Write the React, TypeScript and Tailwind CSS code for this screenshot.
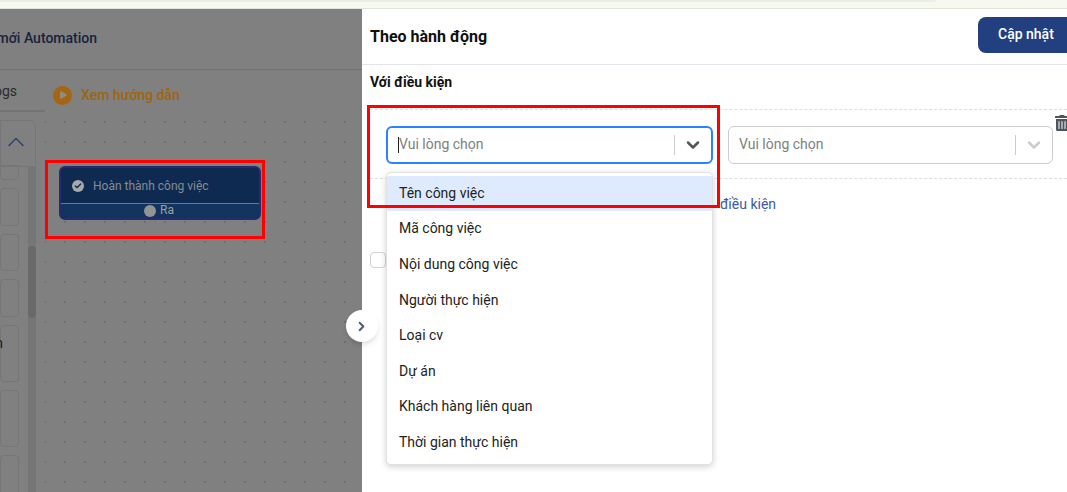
import { Check, ChevronDown, ChevronRight, ChevronUp, Play } from 'lucide-react'
import { FaTrashAlt } from 'react-icons/fa'

const options = [
  'Tên công việc',
  'Mã công việc',
  'Nội dung công việc',
  'Người thực hiện',
  'Loại cv',
  'Dự án',
  'Khách hàng liên quan',
  'Thời gian thực hiện',
]

function Sidebar() {
  return (
    <div className="w-[45px] shrink-0 flex flex-col overflow-hidden">
      <div className="h-[42px] shrink-0 border-b-2 border-[#747474] text-[14px] leading-[42px] text-[#2b2b2b] flex justify-end pr-[28px] whitespace-nowrap">
        Logs
      </div>
      <div className="flex-1 flex flex-col pt-[8px] pr-[9px]">
        <div className="h-[47px] w-full shrink-0 border border-[#767676] rounded-tr-[6px] flex items-center justify-end pr-[5px]">
          <ChevronUp size={28} strokeWidth={1.3} className="text-[#2d4272] -mt-[4px]" />
        </div>
        <div className="flex-1 flex gap-[9px]">
          <div className="w-[19px] flex flex-col gap-[8px] -mt-[2px]">
            <div className="h-[15px] shrink-0 border border-[#767676] rounded-b-[4px]" />
            <div className="h-[38px] shrink-0 border border-[#767676] rounded-[4px]" />
            <div className="h-[37px] shrink-0 border border-[#767676] rounded-[4px]" />
            <div className="h-[38px] shrink-0 border border-[#767676] rounded-[4px]" />
            <div className="h-[57px] shrink-0 border border-[#767676] rounded-[4px] text-[14px] leading-[34px] text-[#1a1a1a] flex justify-end pr-[15px]">
              n
            </div>
            <div className="h-[57px] shrink-0 border border-[#767676] rounded-[4px]" />
            <div className="h-[57px] shrink-0 border border-[#767676] rounded-[4px]" />
          </div>
          <div className="w-[8px] bg-[#767676] relative">
            <div className="absolute top-[79px] left-0 w-full h-[72px] rounded-full bg-[#696969]" />
          </div>
        </div>
      </div>
    </div>
  )
}

function WorkflowNode() {
  return (
    <div className="absolute left-[14px] top-[47px] w-[202px] h-[54px] rounded-[6px] border-2 border-[#262a70] bg-[#0f2a50] overflow-hidden flex flex-col">
      <div className="h-[36px] shrink-0 flex items-center pl-[11px] gap-[9px] border-b border-[#75787a]">
        <span className="w-[12px] h-[12px] rounded-full bg-[#a8a8a8] flex items-center justify-center">
          <Check size={8} strokeWidth={4} className="text-[#0f2a50]" />
        </span>
        <span className="text-[12px] text-[#868c92]">Hoàn thành công việc</span>
      </div>
      <div className="flex-1 bg-[#12355f] flex items-center justify-center gap-[4px] pr-[2px]">
        <span className="w-[12px] h-[12px] rounded-full bg-[#949494]" />
        <span className="text-[12px] leading-none text-[#9a9fa3] -mt-[3px]">Ra</span>
      </div>
    </div>
  )
}

function LeftPane() {
  return (
    <div className="w-[362px] shrink-0 bg-[#808080] flex flex-col">
      <div className="h-[61px] shrink-0 border-b border-[#747474] flex items-center -ml-[30px]">
        <span className="text-[14px] font-medium text-[#16233f] whitespace-nowrap -mt-[2px]">Tạo mới Automation</span>
      </div>
      <div className="flex-1 flex min-h-0">
        <Sidebar />
        <div className="flex-1 flex flex-col min-w-0">
          <div className="h-[50px] shrink-0 flex items-center pl-[8px] gap-[9px] -mb-px">
            <span className="w-[19px] h-[19px] rounded-full bg-[#a5660f] flex items-center justify-center">
              <Play size={10} fill="#8c8c8c" strokeWidth={0} />
            </span>
            <span className="text-[14px] font-medium text-[#a0640f]">Xem hướng dẫn</span>
          </div>
          <div className="relative flex-1 bg-[radial-gradient(circle,#6e6e6e_1px,transparent_1.2px)] bg-[length:20px_20px] bg-[position:-10px_-7px]">
            <WorkflowNode />
          </div>
        </div>
      </div>
    </div>
  )
}

function SelectBox({ focused }: { focused?: boolean }) {
  return (
    <div
      className={`h-[38px] shrink-0 flex items-center rounded-[6px] bg-white ${
        focused ? 'w-[327px] border-2 border-[#2684ff] pl-[10px] pr-[8px]' : 'w-[325px] border border-[#cccccc] pl-[10px] pr-[8px]'
      }`}
    >
      {focused && <span className="w-px h-[16px] bg-[#222] shrink-0" />}
      <span className="flex-1 text-[14px] text-[#808080] -mt-[2px]">Vui lòng chọn</span>
      <span className="w-px h-[20px] bg-[#cccccc] mr-[8px]" />
      <ChevronDown size={20} strokeWidth={3} className={focused ? 'text-[#555555]' : 'text-[#cccccc]'} />
    </div>
  )
}

function Drawer() {
  return (
    <div className="flex-1 bg-white flex flex-col min-w-0">
      <div className="h-[56px] shrink-0 border-b border-[#e4e5ea] flex items-center justify-between pl-[8px] -mr-[20px]">
        <h2 className="text-[16px] font-bold text-[#0f0f0f]">Theo hành động</h2>
        <button className="w-[109px] h-[36px] bg-[#223f80] rounded-[8px] text-white text-[14px] font-medium text-left pl-[20px] -mt-[4px]">
          Cập nhật
        </button>
      </div>
      <div className="pl-[8px] pt-[8px]">
        <div className="text-[14px] font-bold leading-[18px] text-[#111]">Với điều kiện</div>
        <div className="mt-[18px] h-[70px] border-y border-dashed border-[#dedede] flex items-start gap-[15px] pt-[16px] pl-[16px] relative">
          <SelectBox focused />
          <SelectBox />
          <FaTrashAlt size={16} className="absolute -right-[3px] top-[5px] text-[#50555c]" />
        </div>
        <div className="h-[50px] flex items-center pl-[350px] text-[14px] text-[#3a5aa5]">điều kiện</div>
        <div className="h-[16px] w-[16px] mt-[23px] rounded-[4px] border border-[#cfd2d8]" />
      </div>
    </div>
  )
}

export default function App() {
  return (
    <div className="relative w-[1067px] h-[492px] overflow-hidden flex flex-col font-['Roboto',sans-serif]">
      {/* top strip of the host page */}
      <div className="h-[9px] shrink-0 bg-[#f7f9f0] border-b border-[#e1e5da]">
        <div className="h-[2px] w-[936px] bg-[#e8f0e4] rounded-br-[4px]" />
      </div>

      <div className="flex-1 flex min-h-0">
        <LeftPane />
        <Drawer />
      </div>

      {/* collapse toggle */}
      <button className="absolute left-[346px] top-[310px] w-[32px] h-[32px] rounded-full bg-white shadow-md flex items-center justify-center pr-[2px]">
        <ChevronRight size={15} strokeWidth={3} className="text-[#4f5b6b]" />
      </button>

      {/* open dropdown */}
      <div className="absolute left-[386px] top-[172px] w-[327px] h-[293px] bg-white rounded-[5px] border border-[#e2e2e2] shadow-[0_2px_6px_rgba(0,0,0,0.18)] pt-[2.6px]">
        {options.map((o, i) => (
          <div
            key={o}
            className={`h-[35.55px] flex items-center pl-[12px] text-[14px] text-[#222222] ${i === 0 ? 'bg-[#deebff]' : ''}`}
          >
            {o}
          </div>
        ))}
      </div>

      {/* annotation boxes */}
      <div className="absolute left-[45px] top-[160px] w-[220px] h-[79px] border-[3px] border-[#ff0000]" />
      <div className="absolute left-[367px] top-[105px] w-[353px] h-[103px] border-[3px] border-[#ff0000]" />
    </div>
  )
}
